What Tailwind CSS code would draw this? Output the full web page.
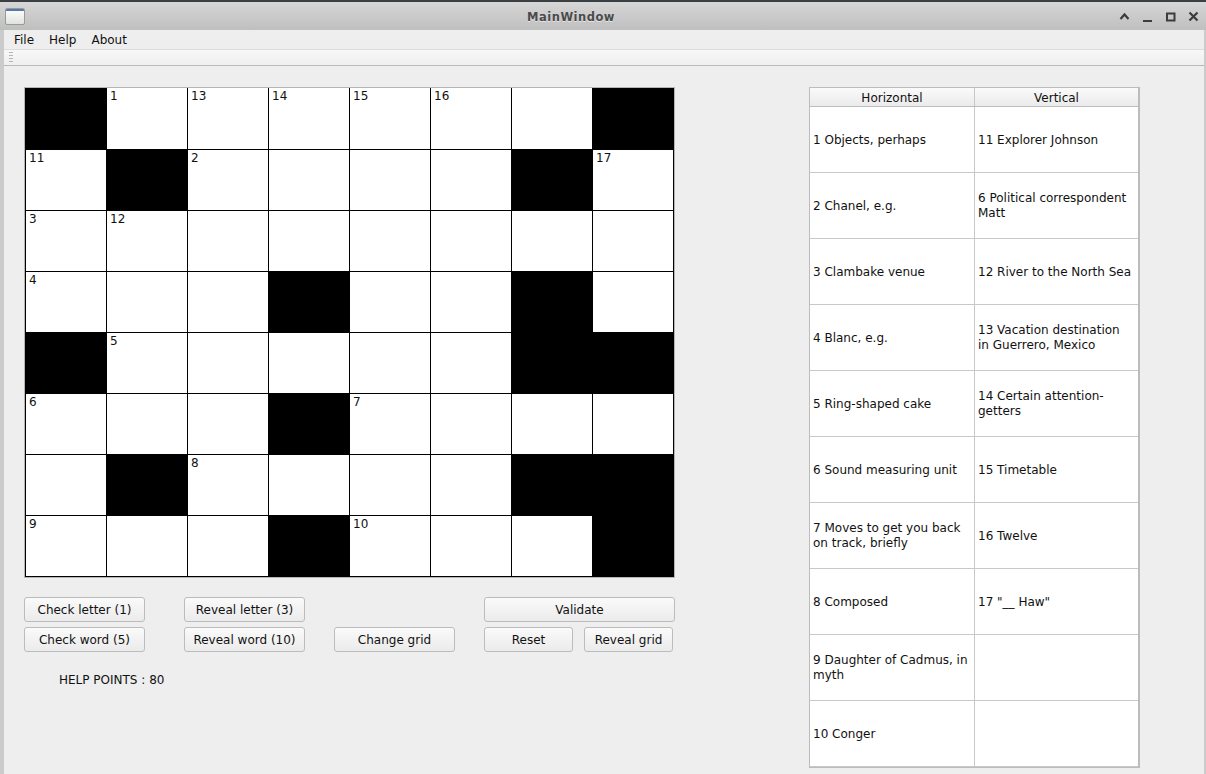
<!DOCTYPE html>
<html lang="en">
<head>
  <meta charset="UTF-8" />
  <title>MainWindow</title>
  <script src="https://cdn.jsdelivr.net/npm/@tailwindcss/browser@4"></script>
</head>
<body class="w-[1206px] h-[774px] overflow-hidden bg-[#eeeeee] text-[12px] leading-[15px] text-[#111111] antialiased font-['DejaVu_Sans',sans-serif]">

  <!-- title bar -->
  <div class="h-[30px] border-t-2 border-[#3a3f44] bg-gradient-to-b from-[#d6d6d6] to-[#bfbfbf] flex items-center relative">
    <div class="ml-[5px] mt-[1px] w-[20px] h-[17px] rounded-[2px] border border-[#9a9a9a] bg-gradient-to-b from-white to-[#dfe3dd] overflow-hidden">
      <div class="h-[2px] bg-[#5577aa]"></div>
    </div>
    <div class="absolute left-0 right-[64px] pt-[2px] text-center font-bold text-[#4a4a4a] text-[11.5px] tracking-[0.5px] [text-shadow:0_1px_0_#e4e4e4]">MainWindow</div>
    <div class="ml-auto mr-[7px] flex items-center gap-[12px] text-[#3c3c3c]">
      <svg width="11" height="11" viewBox="0 0 11 11" fill="none" stroke="currentColor" stroke-width="2.2"><path d="M1.5 8 5.5 3.5 9.5 8" /></svg>
      <svg width="11" height="11" viewBox="0 0 11 11" fill="none" stroke="currentColor" stroke-width="2"><path d="M1 10H10" /></svg>
      <svg width="11" height="11" viewBox="0 0 11 11" fill="none" stroke="currentColor" stroke-width="2"><path d="M2 2.5H9.5V9.5H2Z" /></svg>
      <svg width="11" height="11" viewBox="0 0 11 11" fill="none" stroke="currentColor" stroke-width="2.2"><path d="M1.5 1.5 9.5 9.5M9.5 1.5 1.5 9.5" /></svg>
    </div>
  </div>

  <div class="h-[744px] border-l-4 border-r-2 border-[#cbcbcb] flex flex-col">
    <!-- menu bar -->
    <div class="h-[19px] flex items-center pl-[10px] pt-[2px] gap-[15px] bg-[#eeeeee]">
      <span>File</span><span>Help</span><span>About</span>
    </div>

    <!-- tool bar -->
    <div class="h-[17px] border-t border-b border-t-[#dddddd] border-b-[#b9b9b9] bg-gradient-to-b from-[#f8f8f8] to-[#efefef] flex items-center pl-[5px]">
      <div class="w-[4px] h-[13px] bg-[radial-gradient(#b5b5b5_0.7px,transparent_0.8px)] bg-[length:2px_3px]"></div>
    </div>

    <!-- content -->
    <div class="flex items-start pl-[20px] pt-[21px]">
      <div class="w-[651px]">
        <div id="grid" class="grid grid-cols-[82px_repeat(7,81px)] grid-rows-[62px_repeat(7,61px)] w-[651px] h-[491px] border border-[#b5b5b5] bg-white"></div>

        <div class="mt-[19px] grid grid-cols-[121px_39px_121px_29px_121px_29px_89px_11px_91px] grid-rows-[25px_25px] gap-y-[5px]">
          <button class="col-start-1 row-start-1 pt-[2px] rounded-[3px] border border-[#bcbcbc] bg-gradient-to-b from-[#fafafa] to-[#ebebeb] text-center">Check letter (1)</button>
          <button class="col-start-3 row-start-1 pt-[2px] rounded-[3px] border border-[#bcbcbc] bg-gradient-to-b from-[#fafafa] to-[#ebebeb] text-center">Reveal letter (3)</button>
          <button class="col-start-7 col-span-3 row-start-1 pt-[2px] rounded-[3px] border border-[#bcbcbc] bg-gradient-to-b from-[#fafafa] to-[#ebebeb] text-center">Validate</button>
          <button class="col-start-1 row-start-2 pt-[2px] rounded-[3px] border border-[#bcbcbc] bg-gradient-to-b from-[#fafafa] to-[#ebebeb] text-center">Check word (5)</button>
          <button class="col-start-3 row-start-2 pt-[2px] rounded-[3px] border border-[#bcbcbc] bg-gradient-to-b from-[#fafafa] to-[#ebebeb] text-center">Reveal word (10)</button>
          <button class="col-start-5 row-start-2 pt-[2px] rounded-[3px] border border-[#bcbcbc] bg-gradient-to-b from-[#fafafa] to-[#ebebeb] text-center">Change grid</button>
          <button class="col-start-7 row-start-2 pt-[2px] rounded-[3px] border border-[#bcbcbc] bg-gradient-to-b from-[#fafafa] to-[#ebebeb] text-center">Reset</button>
          <button class="col-start-9 row-start-2 pt-[2px] w-[89px] rounded-[3px] border border-[#bcbcbc] bg-gradient-to-b from-[#fafafa] to-[#ebebeb] text-center">Reveal grid</button>
        </div>

        <div class="mt-[21px] ml-[35px]">HELP POINTS : 80</div>
      </div>

      <!-- clues -->
      <div class="ml-[134px] w-[331px] h-[681px] border border-[#bcbcbc] border-r-2 border-b-2 bg-white">
        <div class="h-[19px] flex border-b border-[#bcbcbc] bg-gradient-to-b from-[#fafafa] to-[#ebebeb]">
          <div class="w-[165px] border-r border-[#c8c8c8] text-center leading-[21px]">Horizontal</div>
          <div class="flex-1 text-center leading-[21px]">Vertical</div>
        </div>
        <div id="clues" class="grid grid-cols-[165px_163px] auto-rows-[66px]"></div>
      </div>
    </div>
  </div>

  <script>
    const blacks = ['0,0','0,7','1,1','1,6','3,3','3,6','4,0','4,6','4,7','5,3','6,1','6,6','6,7','7,3','7,7'];
    const numbers = {
      '0,1':1, '0,2':13, '0,3':14, '0,4':15, '0,5':16,
      '1,0':11, '1,2':2, '1,7':17,
      '2,0':3, '2,1':12,
      '3,0':4,
      '4,1':5,
      '5,0':6, '5,4':7,
      '6,2':8,
      '7,0':9, '7,4':10
    };
    const grid = document.getElementById('grid');
    for (let r = 0; r < 8; r++) {
      for (let c = 0; c < 8; c++) {
        const key = r + ',' + c;
        const cell = document.createElement('div');
        cell.className = blacks.includes(key)
          ? 'bg-black border-r border-b border-black'
          : c === 0
            ? 'bg-white border-l border-r border-b border-black pl-[3px] pt-[1px]'
            : 'bg-white border-r border-b border-black pl-[3px] pt-[1px]';
        if (numbers[key]) cell.textContent = numbers[key];
        grid.appendChild(cell);
      }
    }

    const clues = [
      ['1 Objects, perhaps', '11 Explorer Johnson'],
      ['2 Chanel, e.g.', '6 Political correspondent Matt'],
      ['3 Clambake venue', '12 River to the North Sea'],
      ['4 Blanc, e.g.', '13 Vacation destination in Guerrero, Mexico'],
      ['5 Ring-shaped cake', '14 Certain attention-getters'],
      ['6 Sound measuring unit', '15 Timetable'],
      ['7 Moves to get you back on track, briefly', '16 Twelve'],
      ['8 Composed', '17 "__ Haw"'],
      ['9 Daughter of Cadmus, in myth', ''],
      ['10 Conger', '']
    ];
    const cluesEl = document.getElementById('clues');
    clues.forEach(row => {
      row.forEach((text, i) => {
        const cell = document.createElement('div');
        cell.className = i === 0
          ? 'flex items-center pl-[3px] pr-[3px] pt-[1px] border-r border-b border-[#c8c8c8]'
          : 'flex items-center pl-[3px] pr-[5px] pt-[1px] border-b border-[#c8c8c8]';
        cell.textContent = text;
        cluesEl.appendChild(cell);
      });
    });
  </script>

</body>
</html>
